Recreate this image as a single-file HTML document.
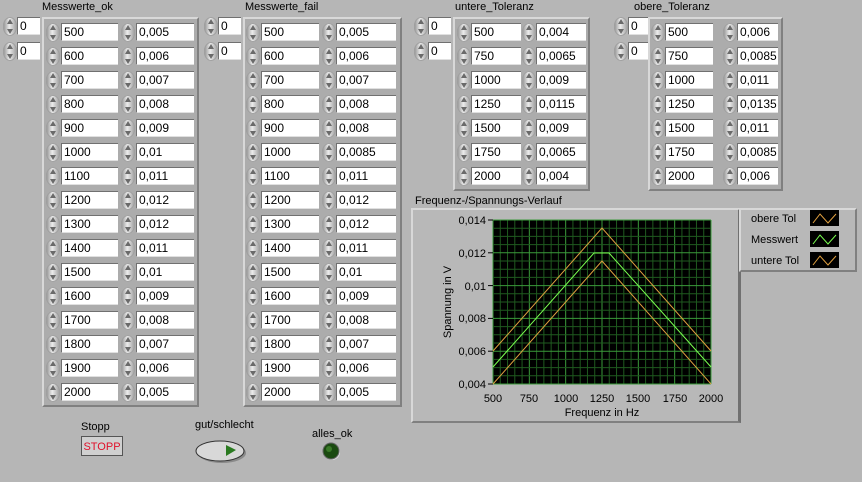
<!DOCTYPE html><html><head><style>
body{margin:0;width:862px;height:482px;background:#b6b6b6;position:relative;overflow:hidden;font-family:"Liberation Sans",sans-serif;font-size:11px;color:#000}
.a{position:absolute}
.lbl{position:absolute;font-size:11px;white-space:nowrap}
.fr{position:absolute;background:#acacac;border-top:2px solid #d8d8d8;border-left:2px solid #d8d8d8;border-right:2px solid #808080;border-bottom:2px solid #808080;box-sizing:border-box}
.sp{position:absolute;width:14px;height:19px;border-radius:7px/9px;background:linear-gradient(90deg,#8e8e8e,#ececec 45%,#9a9a9a);box-shadow:inset 0 0 0 1px #a0a0a0}
.sp:before{content:"";position:absolute;left:4px;top:2px;border-left:3px solid transparent;border-right:3px solid transparent;border-bottom:5px solid #6a6a6a}
.sp:after{content:"";position:absolute;left:4px;bottom:2px;border-left:3px solid transparent;border-right:3px solid transparent;border-top:5px solid #6a6a6a}
.bx{position:absolute;height:18px;background:#fff;border-top:1px solid #707070;border-left:1px solid #707070;border-bottom:1px solid #e0e0e0;box-sizing:border-box;padding-left:2px;line-height:16px;font-size:12px}
</style></head><body>
<div id="r"></div>
<div class="lbl" style="left:42px;top:1px">Messwerte_ok</div>
<div class="lbl" style="left:245px;top:1px">Messwerte_fail</div>
<div class="lbl" style="left:455px;top:1px">untere_Toleranz</div>
<div class="lbl" style="left:634px;top:1px">obere_Toleranz</div>
<div class="lbl" style="left:415px;top:195px">Frequenz-/Spannungs-Verlauf</div>
<div class="fr" style="left:411px;top:208px;width:330px;height:215px;background:#b8b8b8;border-right:3px solid #707070"></div>
<div class="fr" style="left:739px;top:208px;width:118px;height:64px;background:#b8b8b8"></div>
<svg class="a" style="left:0;top:0" width="862" height="482" font-family="Liberation Sans" font-size="11">
<g id="grid"></g>
<polyline fill="none" stroke="#e0a040" points="493,351 602,228 711,351"/>
<polyline fill="none" stroke="#7aff50" points="493,367 594,253 609,253 711,367"/>
<polyline fill="none" stroke="#e0a040" points="493,384 602,261 711,384"/>
<g text-anchor="end" font-size="11">
<text x="486" y="224">0,014</text><text x="486" y="257">0,012</text><text x="486" y="290">0,01</text><text x="486" y="322">0,008</text><text x="486" y="355">0,006</text><text x="486" y="388">0,004</text></g>
<g text-anchor="middle"><text x="493" y="402">500</text><text x="529" y="402">750</text><text x="566" y="402">1000</text><text x="602" y="402">1250</text><text x="638" y="402">1500</text><text x="675" y="402">1750</text><text x="711" y="402">2000</text>
<text x="602" y="416">Frequenz in Hz</text>
<text transform="translate(451,302) rotate(-90)">Spannung in V</text></g>
<text x="751" y="222">obere Tol</text><text x="751" y="243">Messwert</text><text x="751" y="264">untere Tol</text>
<g stroke-width="1"><rect x="810" y="210" width="29" height="16" fill="#000"/><polyline points="813,223 820,214 828,223 836,214" fill="none" stroke="#e0a040"/>
<rect x="810" y="231" width="29" height="16" fill="#000"/><polyline points="813,244 820,235 828,244 836,235" fill="none" stroke="#7aff50"/>
<rect x="810" y="252" width="29" height="16" fill="#000"/><polyline points="813,265 820,256 828,265 836,256" fill="none" stroke="#e0a040"/></g>
<text x="81" y="430">Stopp</text>
<rect x="81.5" y="436.5" width="41" height="19" fill="#d0d0d0" stroke="#555"/>
<text x="102" y="450" text-anchor="middle" fill="#e0102a">STOPP</text>
<text x="195" y="428">gut/schlecht</text>
<ellipse cx="222" cy="453" rx="24" ry="10" fill="#8a8a8a"/>
<ellipse cx="220" cy="451" rx="24" ry="10" fill="#d8d8d8" stroke="#333"/>
<polygon points="226,445 236,450 226,456" fill="#2a7a20"/>
<text x="312" y="437">alles_ok</text>
<circle cx="332" cy="452" r="8" fill="#e0e0e0"/>
<circle cx="331" cy="451" r="8" fill="#1a4a10" stroke="#666"/>
<circle cx="329" cy="449" r="3" fill="#3a7a28"/>
</svg>
<script>
var r=document.getElementById('r'),h='';
function fr(x,y,w,hh){h+='<div class="fr" style="left:'+x+'px;top:'+y+'px;width:'+w+'px;height:'+hh+'px"></div>';}
function sp(x,y){h+='<div class="sp" style="left:'+x+'px;top:'+y+'px"></div>';}
function bx(x,y,w,t){h+='<div class="bx" style="left:'+x+'px;top:'+y+'px;width:'+w+'px">'+t+'</div>';}
function arr(ix,ib,ax,aw,s1,b1,w1,s2,b2,w2,data){
 sp(ix,17);bx(ib,17,ix+37-ib,'0');sp(ix,42);bx(ib,42,ix+37-ib,'0');
 fr(ax,17,aw,data.length*24+6);
 data.forEach(function(d,i){var y=23+i*24;sp(s1,y);bx(b1,y,w1,d[0]);sp(s2,y);bx(b2,y,w2,d[1]);});
}
var f=[500,600,700,800,900,1000,1100,1200,1300,1400,1500,1600,1700,1800,1900,2000];
var ok=['0,005','0,006','0,007','0,008','0,009','0,01','0,011','0,012','0,012','0,011','0,01','0,009','0,008','0,007','0,006','0,005'];
var fl=['0,005','0,006','0,007','0,008','0,008','0,0085','0,011','0,012','0,012','0,011','0,01','0,009','0,008','0,007','0,006','0,005'];
var f7=[500,750,1000,1250,1500,1750,2000];
var ut=['0,004','0,0065','0,009','0,0115','0,009','0,0065','0,004'];
var ob=['0,006','0,0085','0,011','0,0135','0,011','0,0085','0,006'];
arr(3,17,42,157,46,61,57,121,136,58,f.map(function(v,i){return[v,ok[i]]}));
arr(204,218,243,159,246,261,58,322,336,60,f.map(function(v,i){return[v,fl[i]]}));
arr(414,428,453,137,457,471,50,522,536,50,f7.map(function(v,i){return[v,ut[i]]}));
arr(614,628,648,135,651,665,48,723,737,41,f7.map(function(v,i){return[v,ob[i]]}));
r.innerHTML=h;
var g='<rect x="493" y="220" width="218" height="164" fill="#000"/>';
for(var i=0;i<=30;i++){var x=493+i*218/30;g+='<line x1="'+x+'" y1="220" x2="'+x+'" y2="384" stroke="'+(i%5?'#1f5a1f':'#3a9a3a')+'"/>';}
for(var j=0;j<=20;j++){var y=220+j*164/20;g+='<line x1="493" y1="'+y+'" x2="711" y2="'+y+'" stroke="'+(j%4?'#1f5a1f':'#3a9a3a')+'"/>';}
for(var j=0;j<=5;j++){var y=220+j*164/5;g+='<line x1="488" y1="'+y+'" x2="493" y2="'+y+'" stroke="#000"/>';}
document.getElementById('grid').innerHTML=g;
</script>
</body></html>
